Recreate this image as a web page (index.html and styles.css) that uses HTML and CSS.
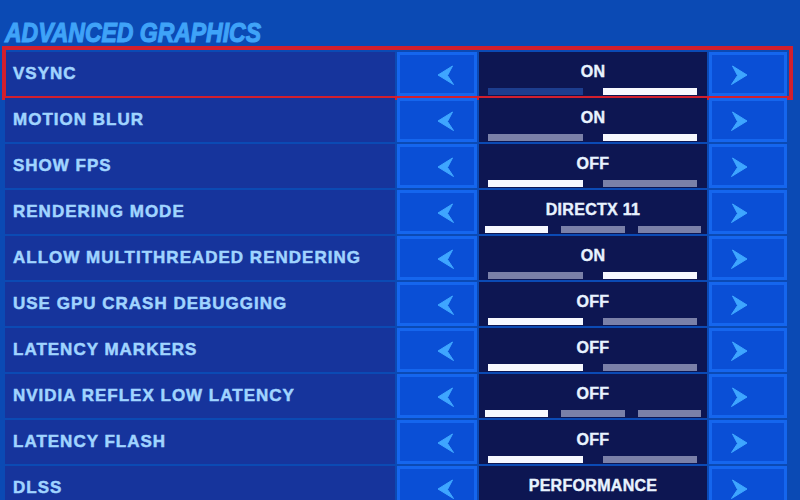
FILE: index.html
```html
<!DOCTYPE html>
<html>
<head>
<meta charset="utf-8">
<link rel="stylesheet" href="styles.css">
</head>
<body>
<div class="page">
  <div class="title"><span class="title-text">ADVANCED GRAPHICS</span></div>
  <div class="list">
    <div class="row selected">
      <div class="label">VSYNC</div>
      <div class="btn btn-left"><svg class="arrow" viewBox="0 0 18 20"><path d="M1 10 L15.5 1 L10.5 10.5 L16.5 19.5 Z"/></svg></div>
      <div class="value"><div class="vtext">ON</div><div class="bars two"><span class="bar dim"></span><span class="bar on"></span></div></div>
      <div class="btn btn-right"><svg class="arrow" viewBox="0 0 18 20"><path d="M17 10 L2.5 1 L7.5 10.5 L1.5 19.5 Z"/></svg></div>
    </div>
    <div class="row">
      <div class="label">MOTION BLUR</div>
      <div class="btn btn-left"><svg class="arrow" viewBox="0 0 18 20"><path d="M1 10 L15.5 1 L10.5 10.5 L16.5 19.5 Z"/></svg></div>
      <div class="value"><div class="vtext">ON</div><div class="bars two"><span class="bar"></span><span class="bar on"></span></div></div>
      <div class="btn btn-right"><svg class="arrow" viewBox="0 0 18 20"><path d="M17 10 L2.5 1 L7.5 10.5 L1.5 19.5 Z"/></svg></div>
    </div>
    <div class="row">
      <div class="label">SHOW FPS</div>
      <div class="btn btn-left"><svg class="arrow" viewBox="0 0 18 20"><path d="M1 10 L15.5 1 L10.5 10.5 L16.5 19.5 Z"/></svg></div>
      <div class="value"><div class="vtext">OFF</div><div class="bars two"><span class="bar on"></span><span class="bar"></span></div></div>
      <div class="btn btn-right"><svg class="arrow" viewBox="0 0 18 20"><path d="M17 10 L2.5 1 L7.5 10.5 L1.5 19.5 Z"/></svg></div>
    </div>
    <div class="row">
      <div class="label">RENDERING MODE</div>
      <div class="btn btn-left"><svg class="arrow" viewBox="0 0 18 20"><path d="M1 10 L15.5 1 L10.5 10.5 L16.5 19.5 Z"/></svg></div>
      <div class="value"><div class="vtext">DIRECTX 11</div><div class="bars three"><span class="bar on"></span><span class="bar"></span><span class="bar"></span></div></div>
      <div class="btn btn-right"><svg class="arrow" viewBox="0 0 18 20"><path d="M17 10 L2.5 1 L7.5 10.5 L1.5 19.5 Z"/></svg></div>
    </div>
    <div class="row">
      <div class="label">ALLOW MULTITHREADED RENDERING</div>
      <div class="btn btn-left"><svg class="arrow" viewBox="0 0 18 20"><path d="M1 10 L15.5 1 L10.5 10.5 L16.5 19.5 Z"/></svg></div>
      <div class="value"><div class="vtext">ON</div><div class="bars two"><span class="bar"></span><span class="bar on"></span></div></div>
      <div class="btn btn-right"><svg class="arrow" viewBox="0 0 18 20"><path d="M17 10 L2.5 1 L7.5 10.5 L1.5 19.5 Z"/></svg></div>
    </div>
    <div class="row">
      <div class="label">USE GPU CRASH DEBUGGING</div>
      <div class="btn btn-left"><svg class="arrow" viewBox="0 0 18 20"><path d="M1 10 L15.5 1 L10.5 10.5 L16.5 19.5 Z"/></svg></div>
      <div class="value"><div class="vtext">OFF</div><div class="bars two"><span class="bar on"></span><span class="bar"></span></div></div>
      <div class="btn btn-right"><svg class="arrow" viewBox="0 0 18 20"><path d="M17 10 L2.5 1 L7.5 10.5 L1.5 19.5 Z"/></svg></div>
    </div>
    <div class="row">
      <div class="label">LATENCY MARKERS</div>
      <div class="btn btn-left"><svg class="arrow" viewBox="0 0 18 20"><path d="M1 10 L15.5 1 L10.5 10.5 L16.5 19.5 Z"/></svg></div>
      <div class="value"><div class="vtext">OFF</div><div class="bars two"><span class="bar on"></span><span class="bar"></span></div></div>
      <div class="btn btn-right"><svg class="arrow" viewBox="0 0 18 20"><path d="M17 10 L2.5 1 L7.5 10.5 L1.5 19.5 Z"/></svg></div>
    </div>
    <div class="row">
      <div class="label">NVIDIA REFLEX LOW LATENCY</div>
      <div class="btn btn-left"><svg class="arrow" viewBox="0 0 18 20"><path d="M1 10 L15.5 1 L10.5 10.5 L16.5 19.5 Z"/></svg></div>
      <div class="value"><div class="vtext">OFF</div><div class="bars three"><span class="bar on"></span><span class="bar"></span><span class="bar"></span></div></div>
      <div class="btn btn-right"><svg class="arrow" viewBox="0 0 18 20"><path d="M17 10 L2.5 1 L7.5 10.5 L1.5 19.5 Z"/></svg></div>
    </div>
    <div class="row">
      <div class="label">LATENCY FLASH</div>
      <div class="btn btn-left"><svg class="arrow" viewBox="0 0 18 20"><path d="M1 10 L15.5 1 L10.5 10.5 L16.5 19.5 Z"/></svg></div>
      <div class="value"><div class="vtext">OFF</div><div class="bars two"><span class="bar on"></span><span class="bar"></span></div></div>
      <div class="btn btn-right"><svg class="arrow" viewBox="0 0 18 20"><path d="M17 10 L2.5 1 L7.5 10.5 L1.5 19.5 Z"/></svg></div>
    </div>
    <div class="row">
      <div class="label">DLSS</div>
      <div class="btn btn-left"><svg class="arrow" viewBox="0 0 18 20"><path d="M1 10 L15.5 1 L10.5 10.5 L16.5 19.5 Z"/></svg></div>
      <div class="value"><div class="vtext">PERFORMANCE</div><div class="bars three"><span class="bar"></span><span class="bar on"></span><span class="bar"></span></div></div>
      <div class="btn btn-right"><svg class="arrow" viewBox="0 0 18 20"><path d="M17 10 L2.5 1 L7.5 10.5 L1.5 19.5 Z"/></svg></div>
    </div>
  </div>
</div>
</body>
</html>
```
FILE: styles.css
```css
html, body {
  margin: 0;
  padding: 0;
  background: #0b4ab4;
  overflow: hidden;
}
.page {
  width: 800px;
  height: 500px;
  overflow: hidden;
  padding-left: 5px;
  box-sizing: border-box;
  font-family: "Liberation Sans", Arial, sans-serif;
}
.title {
  height: 52px;
  box-sizing: border-box;
  padding-top: 18px;
  line-height: 30px;
}
.title-text {
  display: inline-block;
  font-size: 28px;
  font-weight: bold;
  font-style: italic;
  color: #3fa3f8;
  -webkit-text-stroke: 1.2px #3fa3f8;
  letter-spacing: 0;
  transform: scaleX(0.82);
  transform-origin: left center;
  white-space: nowrap;
}
.list {
  display: flex;
  flex-direction: column;
  gap: 2px;
}
.row {
  position: relative;
  display: grid;
  grid-template-columns: 390px 80px 228px 78px;
  column-gap: 2px;
  width: 782px;
  height: 44px;
}
.row.selected::after {
  content: "";
  position: absolute;
  top: -6px;
  bottom: -4px;
  left: -3px;
  right: -6px;
  border: 4px solid #d21f2d;
  pointer-events: none;
}
.label {
  background: #16349c;
  color: #a0d4ff;
  font-size: 17px;
  font-weight: bold;
  letter-spacing: 1px;
  -webkit-text-stroke: 0.5px #a0d4ff;
  padding-left: 8px;
  display: flex;
  align-items: center;
  white-space: nowrap;
}
.btn {
  background: #0a4fd6;
  border: 3px solid #1566ee;
  box-sizing: border-box;
  display: flex;
  align-items: center;
  padding-top: 2px;
}
.btn-left {
  justify-content: flex-end;
  padding-right: 19px;
}
.btn-right {
  justify-content: flex-start;
  padding-left: 18px;
}
.arrow {
  width: 18px;
  height: 20px;
  fill: #3ea6ff;
  stroke: #3ea6ff;
  stroke-width: 1;
  stroke-linejoin: round;
}
.value {
  background: #0d1652;
  display: flex;
  flex-direction: column;
  align-items: center;
}
.vtext {
  margin-top: 10px;
  line-height: 20px;
  font-size: 16px;
  font-weight: bold;
  letter-spacing: 0.3px;
  color: #e8f3ff;
  -webkit-text-stroke: 0.4px #e8f3ff;
}
.bars {
  margin-top: auto;
  margin-bottom: 1px;
  display: flex;
  width: 100%;
  box-sizing: border-box;
}
.bars.two {
  padding: 0 10px 0 9px;
  gap: 20px;
}
.bars.three {
  padding: 0 6px;
  gap: 13px;
}
.bar {
  flex: 1;
  height: 7px;
  background: #7a80a8;
}
.bar.on {
  background: #f6f8ff;
}
.bar.dim {
  background: #1c3d8e;
}
```
